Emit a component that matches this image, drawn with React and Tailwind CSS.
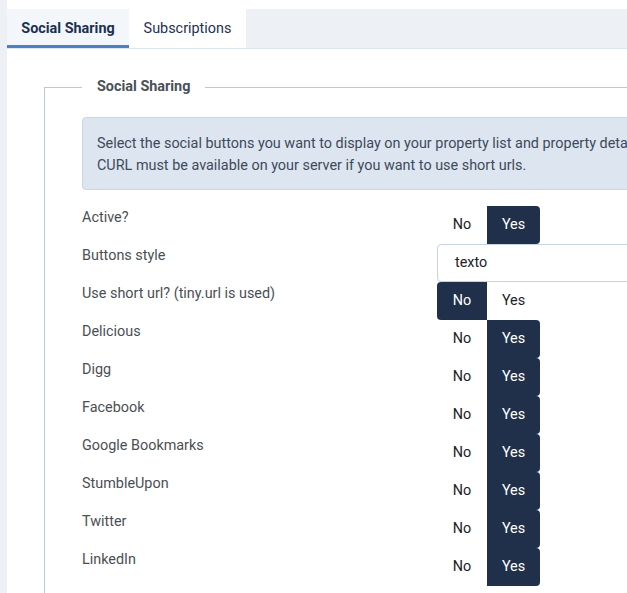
import React from 'react';

const rows = [
    { label: 'Active?', type: 'toggle', value: 'yes' },
    { label: 'Buttons style', type: 'select', value: 'texto' },
    { label: 'Use short url? (tiny.url is used)', type: 'toggle', value: 'no' },
    { label: 'Delicious', type: 'toggle', value: 'yes' },
    { label: 'Digg', type: 'toggle', value: 'yes' },
    { label: 'Facebook', type: 'toggle', value: 'yes' },
    { label: 'Google Bookmarks', type: 'toggle', value: 'yes' },
    { label: 'StumbleUpon', type: 'toggle', value: 'yes' },
    { label: 'Twitter', type: 'toggle', value: 'yes' },
    { label: 'LinkedIn', type: 'toggle', value: 'yes' },
];

const Toggle = ({ value }) => (
    <div className="flex h-[38px] w-[103px] text-[14.4px]">
        <div
            className={`w-[50px] flex items-center justify-center rounded-l-[4px] ${value === 'no' ? 'bg-[#21304a] text-white' : 'text-[#1d2125]'}`}
        >
            No
        </div>
        <div
            className={`w-[53px] flex items-center justify-center rounded-r-[4px] ${value === 'yes' ? 'bg-[#21304a] text-white' : 'text-[#1d2125]'}`}
        >
            Yes
        </div>
    </div>
);

const SelectBox = ({ value }) => (
    <div className="h-[38px] w-[400px] border border-[#c6d3e6] rounded-[4px] pl-[17px] flex items-center text-[14.4px] text-[#1d2125]">
        {value}
    </div>
);

const App = () => {
    return (
        <div className="flex w-[627px] h-[593px] overflow-hidden bg-white font-['Roboto','Liberation_Sans',sans-serif]">
            <div className="w-[7px] shrink-0 bg-[#edf1f6]" />
            <div className="flex-1 min-w-0 pt-[9px]">
                {/* tabs */}
                <div className="flex h-[40px] bg-[#edf1f6] border-b border-[#dde5ef]">
                    <div className="w-[122px] flex items-center justify-center bg-[#f3f6fa] border-b-[3px] border-[#4d7fc4] pt-[3px] text-[14.4px] font-bold text-[#1c3050]">
                        Social Sharing
                    </div>
                    <div className="w-[117px] flex items-center justify-center bg-white text-[14.4px] text-[#24324d]">
                        Subscriptions
                    </div>
                </div>

                <fieldset className="mt-[28px] ml-[37px] w-[900px] border border-[#b7c8df] px-[37px] pb-[20px]">
                    <legend className="px-[15px] text-[14.4px] leading-[20px] font-bold text-[#4a5057]">
                        Social Sharing
                    </legend>

                    <div className="mt-[20px] border border-[#c9d6e8] bg-[#dde5f0] rounded-[4px] px-[14px] pt-[15px] pb-[12px] text-[14.4px] leading-[22px] text-[#3d4a5c] whitespace-nowrap">
                        Select the social buttons you want to display on your property list and property details.
                        <br />
                        CURL must be available on your server if you want to use short urls.
                    </div>

                    <div className="mt-[16px] flex flex-col">
                        {rows.map((row) => (
                            <div key={row.label} className="flex h-[38px]">
                                <div className="w-[355px] shrink-0 pt-[2px] text-[14.4px] leading-[20px] text-[#4b4f54]">
                                    {row.label}
                                </div>
                                {row.type === 'toggle' ? <Toggle value={row.value} /> : <SelectBox value={row.value} />}
                            </div>
                        ))}
                    </div>
                </fieldset>
            </div>
        </div>
    );
};

export default App;
